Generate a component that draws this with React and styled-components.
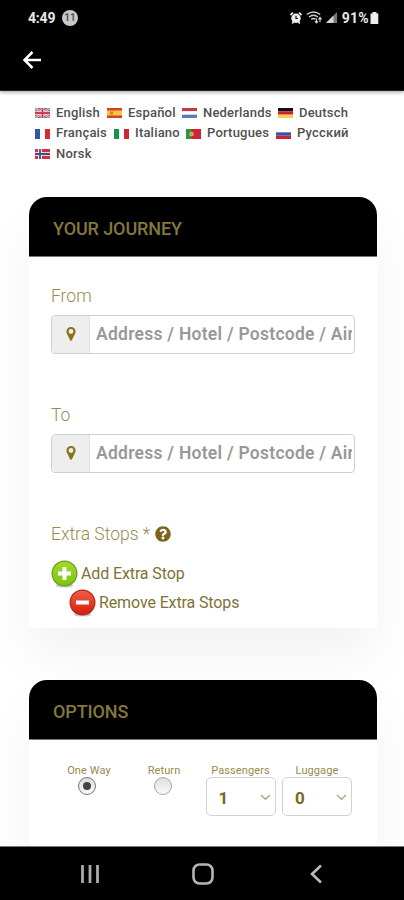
import styled, { createGlobalStyle } from "styled-components";
import { FaQuestionCircle } from "react-icons/fa";

const GlobalStyle = createGlobalStyle`
  * {
    box-sizing: border-box;
  }
  body {
    margin: 0;
    background-color: #ffffff;
    font-family: "Roboto", "Liberation Sans", sans-serif;
  }
  svg {
    display: block;
    flex: none;
  }
`;
const Screen = styled.div`
  display: flex;
  flex-direction: column;
  width: 404px;
  height: 900px;
  overflow: hidden;
`;
const TopBar = styled.header`
  flex: none;
  height: 91px;
  background-color: #000000;
  border-bottom: 1px solid #221e1f;
  box-shadow: 0 1px 4px rgba(0, 0, 0, 0.4);
  z-index: 1;
`;
const StatusBar = styled.div`
  display: flex;
  align-items: center;
  height: 35px;
  padding: 0 25px 0 28px;
  color: #e8e8e8;
  font-size: 14px;
  font-weight: 700;
`;
const Clock = styled.span`
  width: 28px;
  letter-spacing: -0.2px;
`;
const Badge = styled.span`
  width: 16px;
  height: 16px;
  margin-left: 6px;
  border-radius: 50%;
  background-color: #c8c8c8;
  color: #555555;
  font-size: 10px;
  line-height: 16px;
  text-align: center;
`;
const StatusIcons = styled.div`
  display: flex;
  align-items: center;
  gap: 4px;
  margin-left: auto;
`;
const Battery = styled.span`
  display: flex;
  align-items: center;
  gap: 1px;
  padding-left: 1px;
  letter-spacing: 0.3px;
`;
const BackButton = styled.button`
  display: block;
  margin: 15px 0 0 22px;
  padding: 0;
  border: none;
  background: none;
`;
const Page = styled.main`
  flex: 1;
  min-height: 0;
  overflow: hidden;
  padding: 11px 27px 0 29px;
`;
const Languages = styled.nav`
  padding-left: 6px;
  height: 95px;
`;
const LanguageRow = styled.div`
  display: flex;
  gap: 7px;
  height: 20.5px;
`;
const Language = styled.a`
  display: flex;
  align-items: center;
  gap: 6px;
  width: ${(props) => props.$width}px;
  color: #505050;
  font-size: 13px;
  font-weight: 500;
  letter-spacing: 0.2px;
  white-space: nowrap;
  svg {
    margin-top: 2px;
  }
`;
const Card = styled.section`
  height: ${(props) => props.$height}px;
  margin-bottom: 52px;
  border-radius: 18px 18px 0 0;
  background-color: #ffffff;
  box-shadow: 0 30px 50px rgba(0, 0, 0, 0.05);
`;
const CardTitle = styled.h2`
  height: 60px;
  margin: 0;
  padding: 2px 24px 0;
  border-bottom: 1px solid #777777;
  border-radius: 18px 18px 0 0;
  background-color: #000000;
  color: #85783c;
  font-size: 18px;
  font-weight: 500;
  line-height: 60px;
  letter-spacing: -0.1px;
`;
const CardBody = styled.div`
  padding: 27px 22px 0;
`;
const Field = styled.div`
  height: 119px;
`;
const Label = styled.label`
  display: flex;
  align-items: center;
  gap: 5px;
  height: 24px;
  color: #978c52;
  font-size: 17.5px;
  font-weight: 300;
`;
const InputGroup = styled.div`
  display: flex;
  width: 304px;
  height: 39px;
  margin-top: 7px;
  border: 1px solid #cfcfcf;
  border-radius: 4px;
  overflow: hidden;
`;
const Addon = styled.span`
  display: flex;
  align-items: center;
  justify-content: center;
  width: 38px;
  padding-bottom: 2px;
  border-right: 1px solid #e2e2e2;
  background-color: #eeeeee;
`;
const Input = styled.input`
  flex: 1;
  min-width: 0;
  margin-right: 2px;
  padding: 0 0 2px 6px;
  border: none;
  outline: none;
  font-family: inherit;
  font-size: 17.5px;
  font-weight: 600;
  letter-spacing: 0.26px;
  &::placeholder {
    color: #989898;
    opacity: 1;
  }
`;
const Stops = styled.div`
  padding-top: 13px;
`;
const StopLink = styled.a`
  display: flex;
  align-items: center;
  gap: 3px;
  height: 29px;
  padding-left: ${(props) => props.$indent || 0}px;
  color: #7f7236;
  font-size: 16px;
  letter-spacing: -0.12px;
  white-space: nowrap;
`;
const OptionsRow = styled.div`
  display: flex;
  padding-top: 23px;
`;
const Option = styled.div`
  display: flex;
  flex-direction: column;
  align-items: center;
  width: ${(props) => props.$width}px;
  color: #958b4c;
  font-size: 11px;
  letter-spacing: 0.1px;
`;
const OptionLabel = styled.span`
  height: 14px;
  padding-left: ${(props) => props.$shift || 0}px;
  line-height: 15px;
  white-space: nowrap;
`;
const Radio = styled.span`
  display: flex;
  align-items: center;
  justify-content: center;
  width: 18px;
  height: 18px;
  border: 1px solid ${(props) => (props.$checked ? "#777777" : "#aaaaaa")};
  border-radius: 50%;
  background: linear-gradient(#dddddd, #fafafa);
  &::after {
    content: "";
    width: 8px;
    height: 8px;
    border-radius: 50%;
    background-color: ${(props) => (props.$checked ? "#444444" : "transparent")};
  }
`;
const Select = styled.div`
  display: flex;
  align-items: center;
  justify-content: space-between;
  width: 70px;
  height: 39px;
  padding: 2px 4px 0 12px;
  border: 1px solid #d2d2d2;
  border-radius: 5px;
  color: #766a20;
  font-size: 17px;
  font-weight: 700;
`;
const NavBar = styled.footer`
  display: flex;
  flex: none;
  align-items: center;
  height: 54px;
  padding-left: 80px;
  border-top: 1px solid #777777;
  background-color: #000000;
`;
const NavButton = styled.span`
  width: ${(props) => props.$width}px;
`;

const stripes = {
  nl: ["#c8364a", "#ffffff", "#5b7bc0"],
  de: ["#111111", "#cf1f2a", "#f2d050"],
  ru: ["#ffffff", "#3a50ad", "#c92339"],
  fr: ["#3256a8", "#ffffff", "#d42b36"],
  it: ["#159548", "#ffffff", "#cf2937"],
};

const Flag = ({ code }) => {
  const colors = stripes[code];
  const vertical = code === "fr" || code === "it";
  return (
    <svg width="15" height="10" viewBox="0 0 15 10">
      {colors &&
        colors.map((color, i) =>
          vertical ? (
            <rect key={i} x={i * 5} width="5" height="10" fill={color} />
          ) : (
            <rect key={i} y={i * 3.34} width="15" height="3.34" fill={color} />
          )
        )}
      {code === "en" && (
        <>
          <rect width="15" height="10" fill="#59659b" />
          <path d="M0 0L15 10M15 0L0 10" stroke="#e5d5dc" strokeWidth="2.4" />
          <path d="M0 0L15 10M15 0L0 10" stroke="#d05a6b" strokeWidth="1" />
          <path d="M7.5 0V10M0 5H15" stroke="#f3dfe3" strokeWidth="3.6" />
          <path d="M7.5 0V10M0 5H15" stroke="#d13c50" strokeWidth="2" />
        </>
      )}
      {code === "es" && (
        <>
          <rect width="15" height="10" fill="#d3402f" />
          <rect y="2.5" width="15" height="5" fill="#f7c53b" />
          <rect x="3" y="3.5" width="3" height="3" fill="#c98035" />
        </>
      )}
      {code === "pt" && (
        <>
          <rect width="15" height="10" fill="#d02536" />
          <rect width="5.5" height="10" fill="#2c9348" />
          <circle cx="5.5" cy="5" r="2.3" fill="#e2b83c" />
          <circle cx="5.5" cy="5" r="1.1" fill="#e27a62" />
        </>
      )}
      {code === "no" && (
        <>
          <rect width="15" height="10" fill="#cf3442" />
          <path d="M5 0V10M0 5H15" stroke="#ffffff" strokeWidth="3.6" />
          <path d="M5 0V10M0 5H15" stroke="#37508f" strokeWidth="1.8" />
        </>
      )}
    </svg>
  );
};

const languages = [
  [
    { code: "en", name: "English", width: 65 },
    { code: "es", name: "Español", width: 68 },
    { code: "nl", name: "Nederlands", width: 89 },
    { code: "de", name: "Deutsch", width: 70 },
  ],
  [
    { code: "fr", name: "Français", width: 72 },
    { code: "it", name: "Italiano", width: 65 },
    { code: "pt", name: "Portugues", width: 83 },
    { code: "ru", name: "Русский", width: 72 },
  ],
  [{ code: "no", name: "Norsk", width: 57 }],
];

const MapMarker = () => (
  <svg width="10" height="14" viewBox="0 0 10 14">
    <path
      d="M5 0A4.6 4.6 0 0 0 .4 4.5C.4 5.4.7 6.1 1 6.8L4.1 13.2C4.4 14 5.6 14 5.9 13.2L9 6.8C9.3 6.1 9.6 5.4 9.6 4.5A4.6 4.6 0 0 0 5 0ZM5 2.1A2.4 2.4 0 1 1 5 6.9A2.4 2.4 0 0 1 5 2.1Z"
      fill="#8a7216"
      fillRule="evenodd"
    />
  </svg>
);

const RoundIcon = ({ id, light, dark, rim, plus }) => (
  <svg width="27" height="28" viewBox="0 0 27 28">
    <defs>
      <linearGradient id={id} x1="0" y1="0" x2="0" y2="1">
        <stop offset="0" stopColor={light} />
        <stop offset="1" stopColor={dark} />
      </linearGradient>
    </defs>
    <ellipse cx="13.5" cy="25.5" rx="9" ry="2" fill="#999999" opacity="0.5" />
    <circle cx="13.5" cy="13.5" r="13" fill={rim} />
    <circle cx="13.5" cy="13.5" r="11.8" fill={`url(#${id})`} />
    <rect x="7" y="11.5" width="13" height="4" fill="#ffffff" />
    {plus && <rect x="11.5" y="7" width="4" height="13" fill="#ffffff" />}
  </svg>
);

const Chevron = () => (
  <svg width="11" height="7" viewBox="0 0 11 7">
    <path d="M1 1L5.5 5.3L10 1" fill="none" stroke="#aaa57b" strokeWidth="1.3" />
  </svg>
);

const AddressField = ({ label }) => (
  <Field>
    <Label>{label}</Label>
    <InputGroup>
      <Addon>
        <MapMarker />
      </Addon>
      <Input placeholder="Address / Hotel / Postcode / Airport" />
    </InputGroup>
  </Field>
);

const App = () => {
  return (
    <Screen>
      <GlobalStyle />
      <TopBar>
        <StatusBar>
          <Clock>4:49</Clock>
          <Badge>11</Badge>
          <StatusIcons>
            <svg width="12" height="12" viewBox="0 0 12 12">
              <path d="M.5 3L3 .7M11.5 3L9 .7M2.3 11.5L3.5 9.5M9.7 11.5L8.5 9.5" stroke="#eeeeee" strokeWidth="1.7" />
              <circle cx="6" cy="6.3" r="4.7" fill="#eeeeee" />
              <path d="M6 3.8V6.5H8" fill="none" stroke="#111111" strokeWidth="1.2" />
            </svg>
            <svg width="16" height="13" viewBox="0 0 16 13">
              <path d="M.8 3.5Q7.5-1.5 14.2 3.5M3 6Q7.5 2.5 12 6M5.3 8.3Q7.5 6.7 9.5 8.3" fill="none" stroke="#cccccc" strokeWidth="1.5" />
              <path d="M10.5 12V7.5M8.8 10L10.5 12L12 10.3M14 6.5V11M12.5 8.5L14 6.5L15.5 8.5" fill="none" stroke="#dddddd" strokeWidth="1.1" />
            </svg>
            <svg width="11" height="11" viewBox="0 0 11 11">
              <path d="M0 11L11 0V11Z" fill="#777777" />
              <path d="M0 11L7.5 3.5V11Z" fill="#d5d5d5" />
            </svg>
            <Battery>
              91%
              <svg width="9" height="12" viewBox="0 0 9 12">
                <path d="M2.5 0H6.5V1.5H8.3V12H.5V1.5H2.5Z" fill="#eeeeee" />
              </svg>
            </Battery>
          </StatusIcons>
        </StatusBar>
        <BackButton>
          <svg width="20" height="20" viewBox="0 0 20 20">
            <path d="M19 10H2.5M10.5 2L2.5 10L10.5 18" fill="none" stroke="#ffffff" strokeWidth="2.5" />
          </svg>
        </BackButton>
      </TopBar>

      <Page>
        <Languages>
          {languages.map((row, i) => (
            <LanguageRow key={i}>
              {row.map(({ code, name, width }) => (
                <Language key={code} $width={width}>
                  <Flag code={code} />
                  {name}
                </Language>
              ))}
            </LanguageRow>
          ))}
        </Languages>

        <Card $height={431}>
          <CardTitle>YOUR JOURNEY</CardTitle>
          <CardBody>
            <AddressField label="From" />
            <AddressField label="To" />
            <Label>
              Extra Stops * <FaQuestionCircle size={16} color="#7c6418" />
            </Label>
            <Stops>
              <StopLink>
                <RoundIcon id="add" light="#a5d82c" dark="#7cc414" rim="#6c9d20" plus />
                Add Extra Stop
              </StopLink>
              <StopLink $indent={18}>
                <RoundIcon id="remove" light="#ef6044" dark="#d91b0b" rim="#a92c1c" />
                Remove Extra Stops
              </StopLink>
            </Stops>
          </CardBody>
        </Card>

        <Card $height={260}>
          <CardTitle>OPTIONS</CardTitle>
          <OptionsRow>
            <Option $width={116}>
              <OptionLabel $shift={4}>One Way</OptionLabel>
              <Radio $checked />
            </Option>
            <Option $width={35}>
              <OptionLabel $shift={3}>Return</OptionLabel>
              <Radio />
            </Option>
            <Option $width={121}>
              <OptionLabel>Passengers</OptionLabel>
              <Select>
                1 <Chevron />
              </Select>
            </Option>
            <Option $width={32}>
              <OptionLabel>Luggage</OptionLabel>
              <Select>
                0 <Chevron />
              </Select>
            </Option>
          </OptionsRow>
        </Card>
      </Page>

      <NavBar>
        <NavButton $width={112}>
          <svg width="20" height="20" viewBox="0 0 20 20">
            <path d="M2.5 1V19M10 1V19M17.5 1V19" stroke="#aaaaaa" strokeWidth="2.8" />
          </svg>
        </NavButton>
        <NavButton $width={117}>
          <svg width="22" height="22" viewBox="0 0 22 22">
            <rect x="1.5" y="1.5" width="19" height="19" rx="6" fill="none" stroke="#b5b5b5" strokeWidth="2.6" />
          </svg>
        </NavButton>
        <NavButton $width={14}>
          <svg width="14" height="20" viewBox="0 0 14 20">
            <path d="M12 1.5L3 10L12 18.5" fill="none" stroke="#bbbbbb" strokeWidth="2.6" />
          </svg>
        </NavButton>
      </NavBar>
    </Screen>
  );
};
export default App;
